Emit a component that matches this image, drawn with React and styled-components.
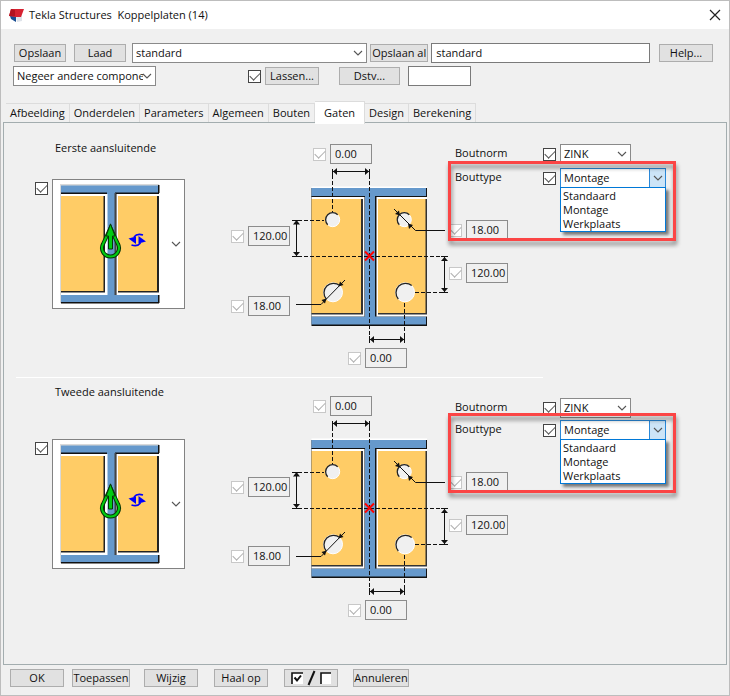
import styled, { createGlobalStyle, css } from 'styled-components';
import { useState } from 'react';

const GlobalStyle = createGlobalStyle`
  * {
    box-sizing: border-box;
  }

  body {
    margin: 0;
    background-color: #f0f0f0;
    color: #111;
    font-family: 'Open Sans', 'Noto Sans', sans-serif;
    font-size: 11px;
    line-height: 14px;
  }

  button, input, select {
    margin: 0;
    font: inherit;
    color: inherit;
  }
`;

const Window = styled.div`
  display: flex;
  flex-direction: column;
  min-height: 100vh;
  border: 1px solid #bdbdbd;
`;

const TitleBar = styled.header`
  display: flex;
  align-items: center;
  height: 28px;
  padding: 0 8px 0 7px;
  background-color: #fff;
`;

const WindowTitle = styled.h1`
  flex: 1;
  margin: 0 0 0 5px;
  font-size: 11px;
  font-weight: 400;
  white-space: pre;
`;

const CloseButton = styled.button`
  display: flex;
  padding: 0;
  border: none;
  background: none;
`;

const Toolbar = styled.div`
  display: flex;
  flex-direction: column;
  gap: 3px;
  padding: 14px 16px 15px 12px;
`;

const ToolbarRow = styled.div`
  display: flex;
  align-items: center;
  height: 20px;
`;

const Button = styled.button`
  display: flex;
  align-items: center;
  justify-content: center;
  flex: none;
  width: ${({ $width }) => $width || 54}px;
  height: 18px;
  margin-left: ${({ $gap }) => $gap || 0}px;
  padding: 0;
  border: 1px solid #adadad;
  background-color: #e1e1e1;
  white-space: nowrap;
  overflow: hidden;
`;

const TextInput = styled.input`
  flex: ${({ $width }) => ($width ? 'none' : '213 1 0')};
  width: ${({ $width }) => ($width ? `${$width}px` : 'auto')};
  min-width: 0;
  height: 20px;
  margin-left: ${({ $gap }) => $gap || 0}px;
  padding: 0 4px 2px;
  border: 1px solid #7a7a7a;
  border-radius: 0;
  background-color: #fff;
`;

const CheckInput = styled.input`
  appearance: none;
  display: grid;
  place-items: center;
  flex: none;
  width: 13px;
  height: 13px;
  border: 1px solid #444;
  background-color: #fff;

  &:checked::before {
    content: '';
    width: 9px;
    height: 5px;
    margin-bottom: 3px;
    border: solid #555;
    border-width: 0 0 1px 1px;
    transform: rotate(-45deg);
  }

  &:disabled {
    border-color: #c8c8c8;
  }

  &:disabled::before {
    border-color: #b0b0b0;
  }
`;

const ComboWrapper = styled.div`
  position: relative;
  flex: ${({ $width }) => ($width ? 'none' : '240 1 0')};
  width: ${({ $width }) => ($width ? `${$width}px` : 'auto')};
  min-width: 0;
  height: 20px;
  margin-left: ${({ $gap }) => $gap || 0}px;
`;

const ComboSelect = styled.select`
  appearance: none;
  width: 100%;
  height: 20px;
  padding: 0 12px 0 3px;
  border: 1px solid ${({ $open }) => ($open ? '#2a88d8' : '#8a8a8a')};
  border-radius: 0;
  background-color: #fff;
`;

const ComboArrow = styled.span`
  position: absolute;
  top: 1px;
  right: 1px;
  bottom: 1px;
  display: flex;
  align-items: center;
  justify-content: center;
  width: 16px;
  pointer-events: none;
  ${({ $open }) =>
    $open &&
    css`
      border-left: 1px solid #2a88d8;
      background-color: #cce4f7;
    `}
`;

const Menu = styled.ul`
  position: absolute;
  top: 19px;
  left: 0;
  right: 0;
  z-index: 2;
  margin: 0;
  padding: 1px 2px 0;
  border: 1px solid #0078d7;
  background-color: #fff;
  box-shadow: 3px 3px 3px rgba(0, 0, 0, 0.5);
  list-style: none;
`;

const Tabs = styled.div`
  display: flex;
  align-items: flex-end;
  height: 23px;
  margin-bottom: -2px;
  padding-left: 5px;
  z-index: 1;
`;

const Tab = styled.button`
  height: 19px;
  margin-bottom: 2px;
  padding: 0 4px;
  border: 1px solid #dcdcdc;
  border-width: 1px 1px 0 0;
  background-color: #f0f0f0;
  white-space: nowrap;

  &[aria-selected='true'] {
    height: 23px;
    margin-bottom: 0;
    padding: 0 9px 1px;
    border-color: #dcdcdc;
    background-color: #fff;
  }
`;

const Panel = styled.main`
  flex: 1;
  margin: 0 2px;
  padding-top: 1px;
  border: 1px solid #a3adaf;
`;

const Divider = styled.hr`
  width: 73%;
  height: 1px;
  margin: 0 0 0 12px;
  border: none;
  background-color: #fff;
`;

const Section = styled.section`
  display: flex;
  padding-bottom: 9px;
`;

const PreviewColumn = styled.div`
  flex: none;
  width: 227px;
  padding: ${({ $top }) => $top}px 0 0 31px;
`;

const SectionTitle = styled.h2`
  margin: 0 0 ${({ $gap }) => $gap}px 20px;
  font-size: 11px;
  font-weight: 400;
  line-height: 16px;
`;

const PreviewRow = styled.div`
  display: flex;
  align-items: flex-start;
  gap: 4px;

  ${CheckInput} {
    margin-top: 3px;
  }
`;

const PreviewButton = styled.button`
  display: flex;
  align-items: center;
  gap: 11px;
  width: 133px;
  height: 130px;
  padding: 0 0 0 6px;
  border: 1px solid #828282;
  background-color: #fff;
`;

const LeftFields = styled.div`
  display: flex;
  flex-direction: column;
  flex: none;
  gap: ${({ $gap }) => $gap}px;
  width: 60px;
  padding-top: ${({ $top }) => $top}px;
`;

const DrawingColumn = styled.div`
  display: flex;
  flex-direction: column;
  flex: none;
  gap: 2px;
  width: 158px;
  padding-top: ${({ $top }) => $top}px;
`;

const FieldRow = styled.div`
  display: flex;
  align-items: center;
  gap: 4px;
  padding-left: ${({ $indent }) => $indent || 0}px;
`;

const FieldInput = styled.input`
  width: 42px;
  height: 20px;
  padding: 0 0 1px 4px;
  border: 1px solid #8c8c8c;
  border-radius: 0;
  background-color: #f0f0f0;
`;

const OptionsColumn = styled.div`
  display: flex;
  flex-direction: column;
  flex: 1;
  gap: ${({ $gap }) => $gap}px;
  padding-top: 20px;
`;

const OptionRow = styled.div`
  display: flex;
  align-items: center;
  height: 20px;
  padding-left: 6px;
`;

const OptionLabel = styled.label`
  flex: none;
  width: 88px;
  padding-bottom: 3px;
`;

const TypeGroup = styled.div`
  position: relative;
`;

const Highlight = styled.div`
  position: absolute;
  top: -7px;
  left: -1px;
  z-index: 3;
  width: 228px;
  height: 80px;
  border: 3px solid #fb4545;
  filter: drop-shadow(1px 4px 2px rgba(0, 0, 0, 0.45));
  pointer-events: none;
`;

const RightFields = styled.div`
  display: flex;
  flex-direction: column;
  gap: 23px;
  padding-top: 32px;
`;

const Footer = styled.footer`
  display: flex;
  padding: 4px 9px 8px;
`;

const tabNames = [
  'Afbeelding',
  'Onderdelen',
  'Parameters',
  'Algemeen',
  'Bouten',
  'Gaten',
  'Design',
  'Berekening',
];

const boltTypes = ['Standaard', 'Montage', 'Werkplaats'];

const ends = [
  {
    id: 'eerste',
    title: 'Eerste aansluitende',
    titleTop: 16,
    titleGap: 23,
    leftTop: 102,
    leftGap: 50,
    drawingTop: 20,
    rowGap: 4,
  },
  {
    id: 'tweede',
    title: 'Tweede aansluitende',
    titleTop: 6,
    titleGap: 39,
    leftTop: 99,
    leftGap: 49,
    drawingTop: 18,
    rowGap: 2,
  },
];

function Chevron() {
  return (
    <svg width="10" height="6" viewBox="0 0 10 6" fill="none">
      <path d="M1 1l4 4 4-4" stroke="#555" strokeWidth="1.1" />
    </svg>
  );
}

function Combo({ options, label, id, width, gap, open }) {
  return (
    <ComboWrapper $width={width} $gap={gap}>
      <ComboSelect id={id} aria-label={label} defaultValue={open ? 'Montage' : options[0]} $open={open}>
        {options.map((option) => (
          <option key={option}>{option}</option>
        ))}
      </ComboSelect>
      <ComboArrow $open={open}>
        <Chevron />
      </ComboArrow>
      {open && (
        <Menu role="listbox" aria-label={label}>
          {options.map((option) => (
            <li key={option} role="option" aria-selected={option === 'Montage'}>
              {option}
            </li>
          ))}
        </Menu>
      )}
    </ComboWrapper>
  );
}

function DimensionField({ name, value, indent }) {
  return (
    <FieldRow $indent={indent}>
      <CheckInput type="checkbox" aria-label={`${name} gebruiken`} defaultChecked disabled />
      <FieldInput type="text" aria-label={name} defaultValue={value} />
    </FieldRow>
  );
}

function AppIcon() {
  return (
    <svg width="16" height="16" viewBox="0 0 16 16">
      <path d="M2 9h6v6l-5-3z" fill="#1b4f93" />
      <path d="M8 9l6-1v6l-5 1z" fill="#dfe3ea" />
      <path d="M3 2h13l-3 8H7L1 9z" fill="#d62231" />
      <path d="M3 2l4 1v6l-6 0z" fill="#b3121f" />
    </svg>
  );
}

function PreviewDrawing() {
  return (
    <svg width="101" height="122" viewBox="7 4 101 122">
      <path d="M8 5h99v119H8z" fill="#d9d9d9" />
      <path d="M9 6.500h98V124H9z" fill="#6699cc" />
      <path d="M9 13.500h46V116H9zM63 13.500h44V116H63z" fill="#111" />
      <path d="M9 15h45v100H9zM65 15h42v100H65z" fill="#fff" />
      <path d="M9 17h44v96.500H9zM66 17h41v96.500H66z" fill="#222" />
      <path d="M9 17h42.500v95H9zM66 17h39v95H66z" fill="#ffcc66" />
      <path d="M54 15h1.500v101H9v-1.500h45zM64.500 15h1.500v99.500h41v1.500H64.500z" fill="#fff" />
      <path d="M62.500 14h1.500v102h-1.500z" fill="#444" />
      <path d="M9 123h98v1.500H9zM106 6h1.500v8H106zM106 116h1.500v8H106z" fill="#111" />
      {/* orientation arrow */}
      <path d="M58.500 49L51 65a8.500 8.500 0 1 0 15 0z" fill="none" stroke="#063506" strokeWidth="4" />
      <path d="M58.500 49L51 65a8.500 8.500 0 1 0 15 0z" fill="none" stroke="#00cc11" strokeWidth="2" />
      <path d="M58.500 45l4.500 12h-2.500v13h-4V57H54z" fill="#00cc11" stroke="#063506" />
      {/* swap arrows */}
      <path d="M76.500 59.500l7.500-2V65zM94 62.500l-7.500 2V57z" fill="#0000ff" />
      <path d="M82 58q3-4 9-2M88.500 64q-3 4-9 2" fill="none" stroke="#0000ff" strokeWidth="1.600" />
    </svg>
  );
}

function HoleDrawing() {
  return (
    <svg width="158" height="180" viewBox="0 0 158 180">
      <path d="M20.500 20.500H136v2H20.500z" fill="#fff" />
      <path d="M20.500 22H136v138H20.500z" fill="#111" />
      <path d="M20.500 22H135v136.500H20.500z" fill="#6699cc" />
      <path d="M20.500 30H74v120.500H20.500zM84 30h52v120.500H84z" fill="#111" />
      <path d="M20.500 31h53v119.500h-53zM85.500 31H136v119.500H85.500z" fill="#fff" />
      <path d="M20.500 33H72v115.500H20.500zM87 33h49v115.500H87z" fill="#333" />
      <path d="M20.500 33h49.500v114H20.500zM87 33h47.500v114H87z" fill="#ffcc66" />

      <g fill="#f0f0f0" stroke="#fff">
        <circle cx="41.700" cy="53.700" r="7" />
        <circle cx="113.300" cy="53.700" r="7" />
        <circle cx="42" cy="126.300" r="9.500" />
        <circle cx="114" cy="126.300" r="9.500" />
      </g>
      <g fill="none" stroke="#222" strokeWidth="1.300">
        <path d="M36.700 58.700a7 7 0 0 1 10-10" />
        <path d="M108.300 58.700a7 7 0 0 1 10-10" />
        <path d="M35.300 133a9.500 9.500 0 0 1 13.400-13.400" />
        <path d="M107.300 133a9.500 9.500 0 0 1 13.400-13.400" />
      </g>

      <g fill="none" stroke="#111" strokeDasharray="4 2">
        <path d="M78.500 3v174" />
        <path d="M41.500 3v43" />
        <path d="M1 54.500h32" />
        <path d="M1 90.500h156" />
        <path d="M124 126.500h33" />
        <path d="M113.500 137v40" />
      </g>
      <g fill="none" stroke="#111">
        <path d="M42 5.500h37" />
        <path d="M5.500 54v36" />
        <path d="M153.500 90v36" />
        <path d="M79 173.500h35" />
        <path d="M103 43l21.500 21.500H154" />
        <path d="M54 114l-24 24.500H5" />
        <path d="M41.500 3v6M78.500 3v6M2 54.500h7M2 90.500h7M150 90.500h7M150 126.500h7M78.500 170v7M113.500 170v7" />
      </g>
      <g fill="#111">
        <path d="M42 5.500l4-3.500v7zM78 5.500L74 2v7z" />
        <path d="M5.500 54L2 58.500h7zM5.500 90L2 86h7z" />
        <path d="M153.500 91l-3.500 4h7zM153.500 126l-3.500-4h7z" />
        <path d="M79 173.500l4-3.500v7zM113 173.500l-4-3.500v7z" />
        <path d="M109 49.500l-5-1.500 4-3.500zM117 57.500l5 1.500-4 4z" />
        <path d="M47.500 120.500l1.500-5 3.500 3.500zM35.500 132.500l-1.500 5-3.500-3.500z" />
      </g>
      <path d="M74 85.500l9 9M83 85.500l-9 9" stroke="#ff0000" strokeWidth="2" />
    </svg>
  );
}

function ToggleIcon() {
  return (
    <svg width="42" height="16" viewBox="0 0 42 16">
      <path d="M2 3h11v11H2zM31 3h10v11H31z" fill="#fff" />
      <path d="M2 14V3h11M31 14V3h10" fill="none" stroke="#111" strokeWidth="1.600" />
      <path d="M4.500 7.500l2.500 3 4-5" fill="none" stroke="#111" strokeWidth="2" />
      <path d="M18.500 15l6-14" stroke="#111" strokeWidth="2" />
    </svg>
  );
}

function EndSection({ end }) {
  return (
    <Section>
      <PreviewColumn $top={end.titleTop}>
        <SectionTitle $gap={end.titleGap}>{end.title}</SectionTitle>
        <PreviewRow>
          <CheckInput type="checkbox" aria-label={end.title} defaultChecked />
          <PreviewButton type="button" aria-label={`${end.title} richting`}>
            <PreviewDrawing />
            <Chevron />
          </PreviewButton>
        </PreviewRow>
      </PreviewColumn>

      <LeftFields $top={end.leftTop} $gap={end.leftGap}>
        <DimensionField name="Afstand boven" value="120.00" />
        <DimensionField name="Diameter links" value="18.00" />
      </LeftFields>

      <DrawingColumn $top={end.drawingTop}>
        <DimensionField name="Verschuiving boven" value="0.00" indent={22} />
        <HoleDrawing />
        <DimensionField name="Verschuiving onder" value="0.00" indent={57} />
      </DrawingColumn>

      <OptionsColumn $gap={end.rowGap}>
        <OptionRow>
          <OptionLabel htmlFor={`${end.id}-norm`}>Boutnorm</OptionLabel>
          <CheckInput type="checkbox" aria-label="Boutnorm gebruiken" defaultChecked />
          <Combo id={`${end.id}-norm`} options={['ZINK']} width={71} gap={4} />
        </OptionRow>
        <TypeGroup>
          <OptionRow>
            <OptionLabel htmlFor={`${end.id}-type`}>Bouttype</OptionLabel>
            <CheckInput type="checkbox" aria-label="Bouttype gebruiken" defaultChecked />
            <Combo id={`${end.id}-type`} options={boltTypes} width={106} gap={4} open />
          </OptionRow>
          <RightFields>
            <DimensionField name="Diameter rechts" value="18.00" />
            <DimensionField name="Afstand onder" value="120.00" />
          </RightFields>
          <Highlight />
        </TypeGroup>
      </OptionsColumn>
    </Section>
  );
}

export default function App() {
  const [activeTab, setActiveTab] = useState('Gaten');

  return (
    <>
      <GlobalStyle />
      <Window>
        <TitleBar>
          <AppIcon />
          <WindowTitle>{'Tekla Structures  Koppelplaten (14)'}</WindowTitle>
          <CloseButton type="button" aria-label="Sluiten">
            <svg width="12" height="12" viewBox="0 0 12 12">
              <path d="M1 1l10 10M11 1L1 11" stroke="#222" strokeWidth="1.200" />
            </svg>
          </CloseButton>
        </TitleBar>

        <Toolbar>
          <ToolbarRow>
            <Button type="button" $width={52} $gap={1}>Opslaan</Button>
            <Button type="button" $width={52} $gap={8}>Laad</Button>
            <Combo label="Instellingen" options={['standard']} gap={6} />
            <Button type="button" $width={58} $gap={3}>Opslaan al</Button>
            <TextInput type="text" aria-label="Naam" defaultValue="standard" $gap={3} />
            <Button type="button" $gap={9}>Help...</Button>
          </ToolbarRow>
          <ToolbarRow>
            <Combo label="Componenten" options={['Negeer andere compone']} width={143} />
            <FieldRow $indent={92}>
              <CheckInput type="checkbox" aria-label="Lassen gebruiken" defaultChecked />
              <Button type="button">Lassen...</Button>
            </FieldRow>
            <Button type="button" $width={61} $gap={20}>Dstv...</Button>
            <TextInput type="text" aria-label="Dstv" $width={63} $gap={8} />
          </ToolbarRow>
        </Toolbar>

        <Tabs role="tablist">
          {tabNames.map((name) => (
            <Tab
              key={name}
              type="button"
              role="tab"
              aria-selected={name === activeTab}
              onClick={() => setActiveTab(name)}
            >
              {name}
            </Tab>
          ))}
        </Tabs>

        <Panel>
          <EndSection end={ends[0]} />
          <Divider />
          <EndSection end={ends[1]} />
        </Panel>

        <Footer>
          <Button type="button">OK</Button>
          <Button type="button" $width={58} $gap={8}>Toepassen</Button>
          <Button type="button" $gap={14}>Wijzig</Button>
          <Button type="button" $gap={16}>Haal op</Button>
          <Button type="button" $gap={16} aria-label="Alles aan of uit">
            <ToggleIcon />
          </Button>
          <Button type="button" $width={56} $gap={15}>Annuleren</Button>
        </Footer>
      </Window>
    </>
  );
}
